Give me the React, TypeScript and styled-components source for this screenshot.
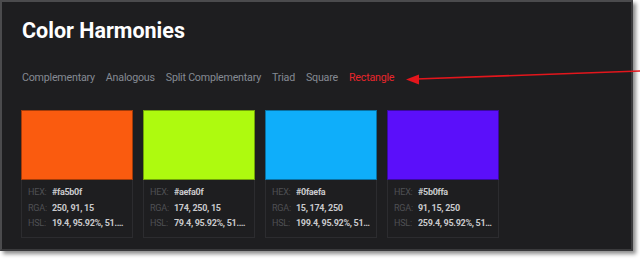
import React from "react";
import styled, { createGlobalStyle } from "styled-components";

const GlobalStyle = createGlobalStyle`
  html, body {
    margin: 0;
    padding: 0;
    background: #ffffff;
  }
  body {
    font-family: Roboto, "Liberation Sans", sans-serif;
  }
`;

const Stage = styled.div`
  position: relative;
  width: 640px;
  height: 259px;
  overflow: hidden;
`;

const Panel = styled.section`
  box-sizing: border-box;
  width: 633px;
  height: 251px;
  background: #1e1e20;
  border: 2px solid #4b4b4d;
  border-right-color: #3a3a3c;
  border-bottom-color: #3a3a3c;
  box-shadow: 3px 3px 4px rgba(0, 0, 0, 0.45);
  padding: 16px 0 0 19px;
`;

const Title = styled.h1`
  margin: 0 0 0 1px;
  font-size: 21.5px;
  font-weight: 700;
  color: #ffffff;
  line-height: 26px;
`;

const Tabs = styled.nav`
  display: flex;
  gap: 11px;
  margin: 27px 0 0 1px;
`;

const Tab = styled.span<{ $active?: boolean }>`
  font-size: 10.7px;
  letter-spacing: -0.22px;
  line-height: 14px;
  color: ${(p) => (p.$active ? "#e8262c" : "#858a93")};
`;

const Cards = styled.div`
  display: flex;
  gap: 10px;
  margin-top: 25px;
`;

const Card = styled.div`
  width: 112px;
`;

const Swatch = styled.div<{ $color: string }>`
  box-sizing: border-box;
  height: 70px;
  background: ${(p) => p.$color};
  border: 1px solid rgba(0, 0, 0, 0.35);
`;

const Info = styled.div`
  box-sizing: border-box;
  height: 58px;
  border: 1px solid #2c2c2f;
  border-top: none;
  padding: 5px 0 0 6px;
  display: grid;
  grid-template-columns: 24px minmax(0, 1fr);
  align-content: start;
`;

const Label = styled.span`
  font-size: 9px;
  letter-spacing: -0.2px;
  line-height: 15.5px;
  color: #4f5054;
`;

const Value = styled.span`
  font-size: 9px;
  letter-spacing: -0.3px;
  line-height: 15.5px;
  font-weight: 700;
  color: #c9c9cc;
  white-space: nowrap;
  overflow: hidden;
  text-overflow: ellipsis;
  padding-right: 5px;
`;

const Arrow = styled.svg`
  position: absolute;
  left: 0;
  top: 0;
  pointer-events: none;
`;

const tabs = [
  "Complementary",
  "Analogous",
  "Split Complementary",
  "Triad",
  "Square",
  "Rectangle",
];

const colors = [
  { color: "#fa5b0f", hex: "#fa5b0f", rgb: "250, 91, 15", hsl: "19.4, 95.92%, 51.96%" },
  { color: "#aefa0f", hex: "#aefa0f", rgb: "174, 250, 15", hsl: "79.4, 95.92%, 51.96%" },
  { color: "#0faefa", hex: "#0faefa", rgb: "15, 174, 250", hsl: "199.4, 95.92%, 51.96%" },
  { color: "#5b0ffa", hex: "#5b0ffa", rgb: "91, 15, 250", hsl: "259.4, 95.92%, 51.96%" },
];

const App: React.FC = () => {
  return (
    <Stage>
      <GlobalStyle />
      <Panel>
        <Title>Color Harmonies</Title>
        <Tabs>
          {tabs.map((t) => (
            <Tab key={t} $active={t === "Rectangle"}>
              {t}
            </Tab>
          ))}
        </Tabs>
        <Cards>
          {colors.map((c) => (
            <Card key={c.hex}>
              <Swatch $color={c.color} />
              <Info>
                <Label>HEX:</Label>
                <Value>{c.hex}</Value>
                <Label>RGA:</Label>
                <Value>{c.rgb}</Value>
                <Label>HSL:</Label>
                <Value>{c.hsl}</Value>
              </Info>
            </Card>
          ))}
        </Cards>
      </Panel>
      <Arrow width="640" height="259" viewBox="0 0 640 259">
        <line x1="640" y1="71" x2="416" y2="79" stroke="#e3161c" strokeWidth="1.6" />
        <polygon points="406,79.4 419,74.5 419,84.5" fill="#e3161c" />
      </Arrow>
    </Stage>
  );
};

export default App;
